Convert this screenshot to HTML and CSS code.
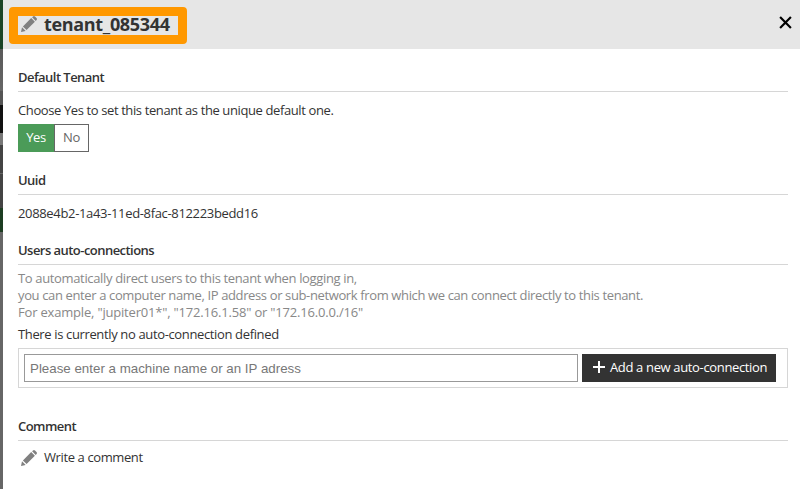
FILE: index.html
```html
<!DOCTYPE html>
<html lang="en"><head><meta charset="utf-8"><title>Tenant</title><link rel="stylesheet" href="styles.css"></head>
<body>
<div class="backdrop"></div>
<main class="panel">
<header class="header">
<div class="title"><svg class="pencil" viewBox="0 0 16 16"><path d="M0 16 1 11.3 4.7 15zM1.9 10.4 10.2 2.1 13.9 5.8 5.6 14.1zM11.1 1.3 12 .4Q13 -.4 14 .5L15.5 2Q16.4 3 15.6 4L14.7 4.9z"/></svg><h1>tenant_085344</h1></div>
<svg class="close" viewBox="0 0 12 12"><path d="M1 1 11 11M11 1 1 11"/></svg>
</header>
<div class="content">
<section class="default"><h2>Default Tenant</h2><p class="choose">Choose Yes to set this tenant as the unique default one.</p>
<div class="toggle"><button class="yes">Yes</button><button class="no">No</button></div></section>
<section class="uuid"><h2>Uuid</h2><p class="id">2088e4b2-1a43-11ed-8fac-812223bedd16</p></section>
<section class="auto"><h2>Users auto-connections</h2>
<div class="help"><p class="line-direct">To automatically direct users to this tenant when logging in,</p><p class="line-enter">you can enter a computer name, IP address or sub-network from which we can connect directly to this tenant.</p><p class="line-example">For example, "jupiter01*", "172.16.1.58" or "172.16.0.0./16"</p></div>
<p class="empty">There is currently no auto-connection defined</p>
<div class="form"><input placeholder="Please enter a machine name or an IP adress"><button class="add"><svg viewBox="0 0 12 12"><path d="M0 6H12M6 0V12"/></svg><span>Add a new auto-connection</span></button></div></section>
<section class="comment"><h2>Comment</h2><div class="write"><svg class="pencil" viewBox="0 0 16 16"><path d="M0 16 1 11.3 4.7 15zM1.9 10.4 10.2 2.1 13.9 5.8 5.6 14.1zM11.1 1.3 12 .4Q13 -.4 14 .5L15.5 2Q16.4 3 15.6 4L14.7 4.9z"/></svg><span>Write a comment</span></div></section>
</div></main></body></html>
```
FILE: styles.css
```css
*{box-sizing:border-box}
body{margin:0;height:489px;display:flex;overflow:hidden;background:#fff;color:#333;font:13px/17px "Open Sans","Noto Sans",sans-serif;white-space:nowrap;letter-spacing:-.39px}
h1,h2,p{margin:0}
button,input{font:inherit;letter-spacing:inherit;margin:0}
.backdrop{width:3px;background:linear-gradient(#1b4427 49px,#5a5a5a 49px,#666 91px,#555 91px 105px,#111 105px 133px,#777 133px 145px,#444 145px 173px,#666 173px 174px,#444 174px 208px,#1d3d22 208px 232px,#666 232px)}
.panel{flex:1}
.header{height:49px;background:#e6e6e6;display:flex;justify-content:space-between;padding:7px 8px 0 6px}
.title{width:178px;height:37px;border:9px solid #ff9800;border-radius:4px;display:flex;align-items:center;padding:0 0 3px 3px;gap:7px}
.title h1{font-size:18px;line-height:19px;letter-spacing:-.33px}
.pencil{width:16px;height:16px;fill:#808080;flex:none}
.close{width:13px;height:13px;margin-top:9px;stroke:#000;stroke-width:2}
.content{padding:20px 12px 0 15px}
h2{height:23px;border-bottom:1px solid #d6d6d6;font-size:13px;line-height:17px;font-weight:600;letter-spacing:-.54px}
.choose{margin-top:10px}
.toggle{display:flex;margin-top:5px;height:28px}
.toggle button{padding:0 0 2px;border:1px solid #4b9b58;background:#4b9b58;color:#fff;width:36px}
.toggle .no{border-color:#666;background:#fff;color:#666;width:35px}
.uuid{margin-top:20px}
.id{margin-top:10px;letter-spacing:-.34px}
.auto{margin-top:20px}
.help{margin-top:5px;color:#888}
.line-direct{letter-spacing:-.35px}
.line-enter{letter-spacing:-.37px}
.line-example{letter-spacing:-.19px}
.empty{margin-top:5px;letter-spacing:-.36px}
.form{display:flex;margin-top:5px;height:40px;border:1px solid #d6d6d6;padding:5px 11px 5px 5px;gap:4px}
.form input{flex:1;border:1px solid #999;padding:0 5px;font:13.333px "Liberation Sans",sans-serif;letter-spacing:0}
input::placeholder{color:#777;opacity:1}
.add{width:194px;background:#333;color:#fff;border:0;padding:0 0 2px 11px;display:flex;align-items:center;gap:5px;letter-spacing:-.35px}
.add svg{width:12px;height:12px;stroke:#fff;stroke-width:2}
.comment{margin-top:30px}
.write{display:flex;align-items:center;margin-top:8px;padding-left:3px;gap:7px}
```
